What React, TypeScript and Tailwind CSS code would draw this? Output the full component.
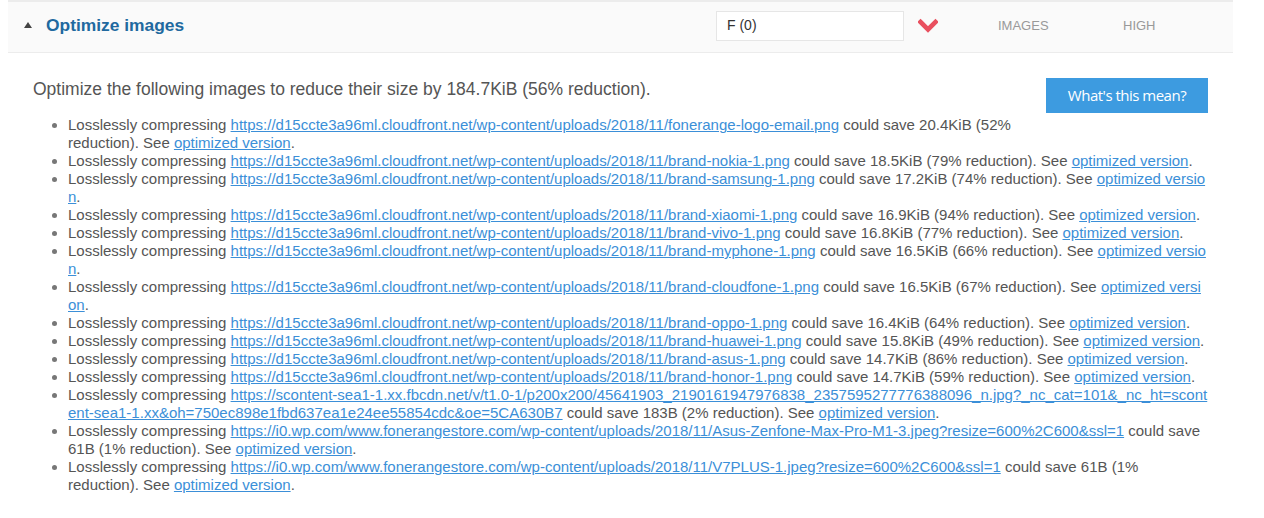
const items: { url: string; rest: string }[] = [
  {
    url: 'https://d15ccte3a96ml.cloudfront.net/wp-content/uploads/2018/11/fonerange-logo-email.png',
    rest: 'could save 20.4KiB (52% reduction).',
  },
  {
    url: 'https://d15ccte3a96ml.cloudfront.net/wp-content/uploads/2018/11/brand-nokia-1.png',
    rest: 'could save 18.5KiB (79% reduction).',
  },
  {
    url: 'https://d15ccte3a96ml.cloudfront.net/wp-content/uploads/2018/11/brand-samsung-1.png',
    rest: 'could save 17.2KiB (74% reduction).',
  },
  {
    url: 'https://d15ccte3a96ml.cloudfront.net/wp-content/uploads/2018/11/brand-xiaomi-1.png',
    rest: 'could save 16.9KiB (94% reduction).',
  },
  {
    url: 'https://d15ccte3a96ml.cloudfront.net/wp-content/uploads/2018/11/brand-vivo-1.png',
    rest: 'could save 16.8KiB (77% reduction).',
  },
  {
    url: 'https://d15ccte3a96ml.cloudfront.net/wp-content/uploads/2018/11/brand-myphone-1.png',
    rest: 'could save 16.5KiB (66% reduction).',
  },
  {
    url: 'https://d15ccte3a96ml.cloudfront.net/wp-content/uploads/2018/11/brand-cloudfone-1.png',
    rest: 'could save 16.5KiB (67% reduction).',
  },
  {
    url: 'https://d15ccte3a96ml.cloudfront.net/wp-content/uploads/2018/11/brand-oppo-1.png',
    rest: 'could save 16.4KiB (64% reduction).',
  },
  {
    url: 'https://d15ccte3a96ml.cloudfront.net/wp-content/uploads/2018/11/brand-huawei-1.png',
    rest: 'could save 15.8KiB (49% reduction).',
  },
  {
    url: 'https://d15ccte3a96ml.cloudfront.net/wp-content/uploads/2018/11/brand-asus-1.png',
    rest: 'could save 14.7KiB (86% reduction).',
  },
  {
    url: 'https://d15ccte3a96ml.cloudfront.net/wp-content/uploads/2018/11/brand-honor-1.png',
    rest: 'could save 14.7KiB (59% reduction).',
  },
  {
    url: 'https://scontent-sea1-1.xx.fbcdn.net/v/t1.0-1/p200x200/45641903_2190161947976838_2357595277776388096_n.jpg?_nc_cat=101&_nc_ht=scontent-sea1-1.xx&oh=750ec898e1fbd637ea1e24ee55854cdc&oe=5CA630B7',
    rest: 'could save 183B (2% reduction).',
  },
  {
    url: 'https://i0.wp.com/www.fonerangestore.com/wp-content/uploads/2018/11/Asus-Zenfone-Max-Pro-M1-3.jpeg?resize=600%2C600&ssl=1',
    rest: 'could save 61B (1% reduction).',
  },
  {
    url: 'https://i0.wp.com/www.fonerangestore.com/wp-content/uploads/2018/11/V7PLUS-1.jpeg?resize=600%2C600&ssl=1',
    rest: 'could save 61B (1% reduction).',
  },
];

export default function App() {
  return (
    <div className="min-h-[518px] bg-white font-['Liberation_Sans',Arial,sans-serif]">
      <div className="ml-[8px] w-[1225px]">
        {/* Rule header */}
        <div className="flex h-[53px] items-center border-t-2 border-b border-[#ececec] bg-[#fafafa] pb-[3px] pl-[16px]">
          <div className="flex flex-1 items-center">
            <span className="mr-[14px] inline-block h-0 w-0 border-x-[4px] border-b-[6px] border-x-transparent border-b-[#444]"></span>
            <span className="text-[17.4px] font-bold text-[#21699f]">Optimize images</span>
          </div>
          <div className="flex h-[30px] w-[188px] items-center border border-[#e6e6e6] bg-white px-[10px] text-[14px] text-[#333]">
            F (0)
          </div>
          <svg className="ml-[14px] h-[16px] w-[20px]" viewBox="0 0 20 16">
            <polyline
              points="2.5,4 10,11.5 17.5,4"
              fill="none"
              stroke="#e9505f"
              strokeWidth="4.6"
              strokeLinecap="square"
            />
          </svg>
          <div className="ml-[60px] w-[125px] text-[13px] text-[#999]">IMAGES</div>
          <div className="w-[110px] text-[13px] text-[#999]">HIGH</div>
        </div>

        {/* Details */}
        <div className="px-[25px] pt-[25px] pb-[20px] text-[#555]">
          <button className="float-right mb-[20px] ml-[10px] h-[35px] w-[162px] bg-[#3d9be0] font-['Open_Sans',sans-serif] text-[15px] tracking-[-0.5px] text-white">
            What's this mean?
          </button>
          <p className="mt-[1px] text-[17.5px] leading-[20px]">
            Optimize the following images to reduce their size by 184.7KiB (56% reduction).
          </p>
          <ul className="mt-[17px] list-disc pl-[35px] text-[15px] leading-[18px] marker:text-[#777]">
            {items.map((item) => (
              <li key={item.url}>
                Losslessly compressing{' '}
                <a href="#" className="break-all text-[#3b8fd8] underline">
                  {item.url}
                </a>{' '}
                {item.rest} See{' '}
                <a href="#" className="break-all text-[#3b8fd8] underline">
                  optimized version
                </a>
                .
              </li>
            ))}
          </ul>
        </div>
      </div>
    </div>
  );
}
